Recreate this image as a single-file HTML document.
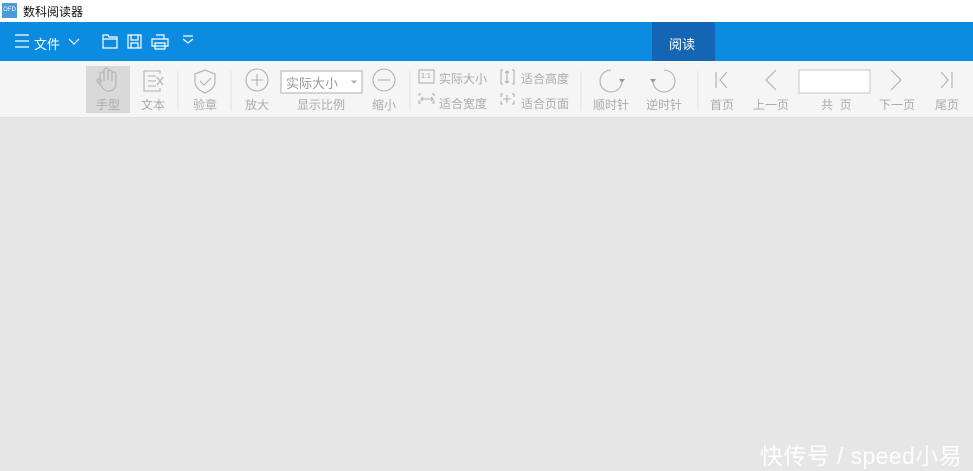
<!DOCTYPE html>
<html><head><meta charset="utf-8"><style>
*{margin:0;padding:0;box-sizing:border-box}
body{width:973px;height:469px;overflow:hidden;background:#e6e6e6;font-family:"Liberation Sans","Noto Sans CJK SC",sans-serif;position:relative}
.a{position:absolute}
.t{font-size:12px;color:#ababab;white-space:nowrap}
svg{position:absolute;overflow:visible}
</style></head><body>
<div class="a" style="left:0;top:0;width:973px;height:22px;background:#fff"></div>
<div class="a" style="left:2px;top:3px;width:15px;height:15px;background:#4a9bd8;color:#fff;font-size:6px;line-height:15px;text-align:center">OFD</div>
<div class="a" style="left:23px;top:3px;font-size:12px;color:#111">数科阅读器</div>
<div class="a" style="left:0;top:22px;width:973px;height:39px;background:#0b8ce0"></div>
<div class="a" style="left:652px;top:22px;width:63px;height:39px;background:#1565b5"></div>
<div class="a" style="left:669px;top:34px;font-size:13px;color:#fff">阅读</div>
<svg style="left:0;top:22px" width="260" height="39" fill="none" stroke="#fff" stroke-width="1.2">
<path d="M15 13h14M15 19h14M15 25h14"/>
<path d="M69 17l5 5 5-5"/>
<path d="M103 13h5l1 2h8v11h-14z M103 17h14"/>
<path d="M128 13h13v13h-13z M131 13v5h7v-5 M131 26v-5h7v5"/>
<path d="M156 13h8v4 M152 17h16v7h-16z M155 21h10v6h-10z"/>
<path d="M183 17l5 4 5-4 M183 14h10"/>
</svg>
<div class="a" style="left:34px;top:34px;font-size:13px;color:#fff">文件</div>
<div class="a" style="left:0;top:61px;width:973px;height:57px;background:#f5f5f5;border-bottom:1px solid #e0e0e0"></div>
<div class="a" style="left:86px;top:66px;width:44px;height:47px;background:#d9d9d9"></div>
<svg style="left:0;top:61px" width="973" height="57" fill="none" stroke="#b0b0b0" stroke-width="1.1">
<path d="M100 22v-9a2 2 0 014 0v7 M104 12v-3a2 2 0 014 0v10 M108 11a2 2 0 014 0v9 M112 13a2 2 0 014 0v9c0 5-3 8-8 8-3 0-5-2-7-5l-4-5a2 2 0 013-2l2 3"/>
<path d="M144 10h16v3 M144 10v20h16v-3 M148 15h8 M148 20h8 M148 25h8 M157 16l6 8 M163 16l-6 8"/>
<path d="M205 9l10 4v8c0 5-5 9-10 11-5-2-10-6-10-11v-8z M200 20l4 4 7-7"/>
<circle cx="257" cy="19" r="11"/><path d="M251 19h12M257 13v12"/>
<circle cx="384" cy="19" r="11"/><path d="M378 19h12"/>
<rect x="281" y="10" width="81" height="22" fill="#fff" stroke="#b5b5b5"/>
<path d="M352 20l2 2 2-2z" fill="#999"/>
<path d="M178 10v40M231 10v40M410 10v40M581 10v40M698 10v40" stroke="#e0e0e0"/>
<rect x="419" y="9" width="15" height="13"/>
<path d="M503 9h-2v14h2M512 9h2v14h-2M507 10v12M505 12l2-2 2 2M505 20l2 2 2-2"/>
<path d="M419 35v-2h2M432 33h2v2M419 39v3h2M434 39v3h-2M421 38h12M423 36l-2 2 2 2M431 36l2 2-2 2"/>
<path d="M503 33h-2v3M512 33h2v3M501 40v3h2M514 40v3h-2M507 34v8M503 38h8"/>
<path d="M622 20A11 11 0 1 1 611 9"/><path d="M619 18l3 4 3-4z" fill="#999" stroke="none"/>
<path d="M653 20A11 11 0 1 0 664 9"/><path d="M650 18l3 4 3-4z" fill="#999" stroke="none"/>
<path d="M716 11v16M727 11l-7 8 7 8"/>
<path d="M776 9l-10 10 10 10"/>
<rect x="799" y="9" width="71" height="23" fill="#fff" stroke="#ccc"/>
<path d="M891 9l10 10-10 10"/>
<path d="M941 11l7 8-7 8M952 11v16"/>
</svg>
<div class="a t" style="left:96px;top:96px">手型</div>
<div class="a t" style="left:141px;top:96px">文本</div>
<div class="a t" style="left:193px;top:96px">验章</div>
<div class="a t" style="left:245px;top:96px">放大</div>
<div class="a t" style="left:297px;top:96px">显示比例</div>
<div class="a t" style="left:372px;top:96px">缩小</div>
<div class="a t" style="left:286px;top:73px;font-size:13px;color:#999">实际大小</div>
<div class="a" style="left:421px;top:73px;font-size:7px;color:#999">1:1</div>
<div class="a t" style="left:439px;top:70px">实际大小</div>
<div class="a t" style="left:521px;top:70px">适合高度</div>
<div class="a t" style="left:439px;top:95px">适合宽度</div>
<div class="a t" style="left:521px;top:95px">适合页面</div>
<div class="a t" style="left:593px;top:96px">顺时针</div>
<div class="a t" style="left:646px;top:96px">逆时针</div>
<div class="a t" style="left:710px;top:96px">首页</div>
<div class="a t" style="left:753px;top:96px">上一页</div>
<div class="a t" style="left:821px;top:96px">共&nbsp;&nbsp;页</div>
<div class="a t" style="left:879px;top:96px">下一页</div>
<div class="a t" style="left:935px;top:96px">尾页</div>
<div class="a" style="left:760px;top:437px;font-size:23px;letter-spacing:0.4px;color:rgba(255,255,255,0.92);white-space:nowrap">快传号 / speed小易</div>
</body></html>
